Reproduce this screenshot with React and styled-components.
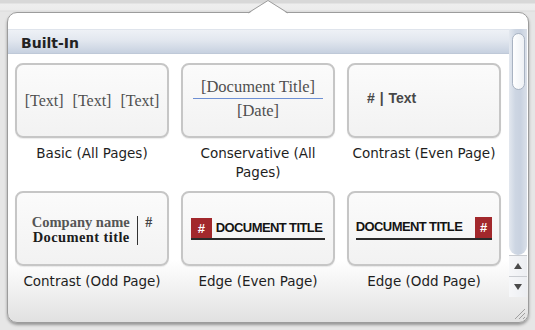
import React from 'react'
import styled, { createGlobalStyle } from 'styled-components'

const GlobalStyle = createGlobalStyle`
  html, body {
    margin: 0;
    padding: 0;
  }
  body {
    background: #e7e7e7;
    font-family: "DejaVu Sans", "Liberation Sans", sans-serif;
  }
`;

const Page = styled.div`
  width: 535px;
  height: 330px;
  overflow: hidden;
  box-sizing: border-box;
  padding: 12px 0 0 7px;
  background: linear-gradient(to bottom, #d8d8d8 0, #d8d8d8 3px, #eeeeee 4px, #ececec 10px, #dcdcdc 11px, #e6e6e6 12px, #e6e6e6 100%);
`;

const Popover = styled.div`
  position: relative;
  width: 522px;
  height: 311px;
  box-sizing: border-box;
  border: 1px solid #9c9c9c;
  border-radius: 10px;
  background: linear-gradient(to bottom, #ffffff 0%, #ffffff 80%, #e1e1e1 100%);
  box-shadow: 0 2px 3px rgba(0, 0, 0, 0.35);
  padding-top: 16px;
  display: flex;
  flex-direction: column;
`;

const Arrow = styled.svg`
  position: absolute;
  top: -13px;
  left: 240px;
`;

const Body = styled.div`
  display: flex;
  height: 268px;
`;

const Content = styled.div`
  flex: 1;
  overflow: hidden;
`;

const Header = styled.div`
  height: 25px;
  box-sizing: border-box;
  padding: 1px 0 0 13px;
  line-height: 24px;
  font-family: "DejaVu Sans", sans-serif;
  font-weight: bold;
  font-size: 14px;
  color: #222;
  background: linear-gradient(to bottom, #eef1f6 0%, #e2e7ef 45%, #c7d1e0 100%);
  border-top: 1px solid #dfe4ec;
  border-bottom: 1px solid #bfc9d8;
`;

const Grid = styled.div`
  display: grid;
  grid-template-columns: repeat(3, 154px);
  column-gap: 12px;
  row-gap: 9px;
  padding: 9px 0 0 7px;
`;

const Item = styled.div`
  display: flex;
  flex-direction: column;
  align-items: center;
`;

const Card = styled.div`
  width: 100%;
  height: 75px;
  box-sizing: border-box;
  border: 2px solid #c6c6c6;
  border-radius: 8px;
  background: linear-gradient(to bottom, #fbfbfb, #f2f2f2);
  box-shadow: 0 1px 1px rgba(0, 0, 0, 0.08);
  display: flex;
  align-items: center;
  justify-content: ${p => (p.$left ? 'flex-start' : 'center')};
  padding-left: ${p => (p.$left ? '18px' : '0')};
`;

const Label = styled.div`
  margin-top: 6px;
  font-family: "DejaVu Sans", sans-serif;
  font-size: 13.5px;
  line-height: 19px;
  color: #1e1e1e;
  text-align: center;
`;

/* card 1 */
const TextRow = styled.div`
  display: flex;
  gap: 9px;
  font-family: "Liberation Serif", serif;
  font-size: 16px;
  color: #4f4f4f;
`;

/* card 2 */
const Stack = styled.div`
  display: flex;
  flex-direction: column;
  align-items: center;
  width: 130px;
  margin-top: -3px;
  font-family: "Liberation Serif", serif;
  font-size: 16.5px;
  line-height: 20px;
  color: #4f4f4f;
`;

const Rule = styled.div`
  align-self: stretch;
  height: 1px;
  margin: 1px 0 2px;
  background: #6d8fd3;
`;

/* card 3 */
const PageText = styled.div`
  margin-bottom: 5px;
  font-family: "Liberation Sans", sans-serif;
  font-weight: bold;
  font-size: 14px;
  word-spacing: 1px;
  color: #484848;
`;

/* card 4 */
const Contrast = styled.div`
  display: flex;
  align-items: center;
  gap: 7px;
  margin-top: 3px;
  font-family: "Liberation Serif", serif;
  font-weight: bold;
`;

const NameBlock = styled.div`
  display: flex;
  flex-direction: column;
  align-items: flex-end;
  line-height: 15px;
`;

const Company = styled.span`
  font-size: 14.5px;
  color: #555;
`;

const DocTitle = styled.span`
  font-size: 14.5px;
  letter-spacing: 0.4px;
  color: #1c1c1c;
`;

const Divider = styled.div`
  width: 1.5px;
  height: 29px;
  background: #333;
`;

const Hash = styled.span`
  align-self: flex-start;
  font-size: 14px;
  line-height: 15px;
  color: #444;
`;

/* cards 5 and 6 */
const Edge = styled.div`
  display: flex;
  align-items: ${p => (p.$odd ? 'flex-end' : 'stretch')};
  border-bottom: 2px solid #2a2a2a;
  margin-top: ${p => (p.$odd ? '0' : '1px')};
`;

const RedBox = styled.div`
  width: ${p => (p.$odd ? '17px' : '21px')};
  height: ${p => (p.$odd ? '21px' : '20px')};
  background: #a2282c;
  color: #fff;
  font-family: "Liberation Sans", sans-serif;
  font-weight: bold;
  font-size: 13px;
  display: flex;
  align-items: center;
  justify-content: center;
`;

const EdgeTitle = styled.span`
  font-family: "Liberation Sans", sans-serif;
  font-weight: bold;
  font-size: 13px;
  letter-spacing: -0.6px;
  line-height: 20px;
  color: #141414;
  margin: ${p => (p.$odd ? '0 13px 1px 0' : '0 3px 0 4px')};
`;

/* scrollbar */
const Scrollbar = styled.div`
  width: 18px;
  margin-right: 1px;
  display: flex;
  flex-direction: column;
`;

const Track = styled.div`
  height: 226px;
  box-sizing: border-box;
  padding: 4px 2px 0 3px;
  border-radius: 0 0 9px 9px;
  background: linear-gradient(to right, #e3e8ef 0%, #cdd6e3 35%, #c9d2e0 65%, #dae0e9 100%);
`;

const Thumb = styled.div`
  height: 57px;
  box-sizing: border-box;
  border: 1px solid #a9b3c2;
  border-radius: 7px;
  background: linear-gradient(to right, #ffffff, #eef1f5);
`;

const ArrowButton = styled.div`
  height: 20px;
  border-top: 1px solid #c9ccd1;
  background: linear-gradient(to right, #f6f7f9, #eceef2);
  display: flex;
  align-items: center;
  justify-content: center;
`;

const Footer = styled.div`
  flex: 1;
  display: flex;
  justify-content: flex-end;
  align-items: flex-end;
  padding: 0 3px 3px 0;
`;

const Triangle = ({ down }) => (
  <svg width="8" height="6" viewBox="0 0 8 6">
    <path d={down ? 'M0 0 L8 0 L4 6 Z' : 'M0 6 L8 6 L4 0 Z'} fill="#4a4a4a" />
  </svg>
);

const templates = [
  {
    label: 'Basic (All Pages)',
    body: (
      <Card>
        <TextRow>
          <span>[Text]</span>
          <span>[Text]</span>
          <span>[Text]</span>
        </TextRow>
      </Card>
    ),
  },
  {
    label: 'Conservative (All Pages)',
    body: (
      <Card>
        <Stack>
          <span>[Document Title]</span>
          <Rule />
          <span>[Date]</span>
        </Stack>
      </Card>
    ),
  },
  {
    label: 'Contrast (Even Page)',
    body: (
      <Card $left>
        <PageText># | Text</PageText>
      </Card>
    ),
  },
  {
    label: 'Contrast (Odd Page)',
    body: (
      <Card>
        <Contrast>
          <NameBlock>
            <Company>Company name</Company>
            <DocTitle>Document title</DocTitle>
          </NameBlock>
          <Divider />
          <Hash>#</Hash>
        </Contrast>
      </Card>
    ),
  },
  {
    label: 'Edge (Even Page)',
    body: (
      <Card>
        <Edge>
          <RedBox>#</RedBox>
          <EdgeTitle>DOCUMENT TITLE</EdgeTitle>
        </Edge>
      </Card>
    ),
  },
  {
    label: 'Edge (Odd Page)',
    body: (
      <Card>
        <Edge $odd>
          <EdgeTitle $odd>DOCUMENT TITLE</EdgeTitle>
          <RedBox $odd>#</RedBox>
        </Edge>
      </Card>
    ),
  },
];

const App = () => {
  return (
    <Page>
      <GlobalStyle />
      <Popover>
        <Arrow width="40" height="14" viewBox="0 0 40 14">
          <path d="M0 14 L20 0.5 L40 14 Z" fill="#ffffff" />
          <path d="M0 13 L20 0.5 L40 13" fill="none" stroke="#9c9c9c" strokeWidth="1" />
        </Arrow>
        <Body>
          <Content>
            <Header>Built-In</Header>
            <Grid>
              {templates.map((t, index) => (
                <Item key={index}>
                  {t.body}
                  <Label>{t.label}</Label>
                </Item>
              ))}
            </Grid>
          </Content>
          <Scrollbar>
            <Track>
              <Thumb />
            </Track>
            <ArrowButton>
              <Triangle />
            </ArrowButton>
            <ArrowButton>
              <Triangle down />
            </ArrowButton>
          </Scrollbar>
        </Body>
        <Footer>
          <svg width="12" height="12" viewBox="0 0 12 12">
            <path d="M2 12 L12 2 M6 12 L12 6 M10 12 L12 10" stroke="#a0a0a0" strokeWidth="1" />
          </svg>
        </Footer>
      </Popover>
    </Page>
  );
};

export default App;
